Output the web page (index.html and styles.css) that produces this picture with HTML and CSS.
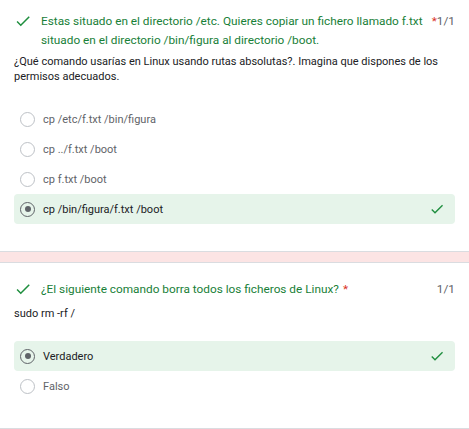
FILE: index.html
```html
<!DOCTYPE html>
<html lang="es">
<head>
<meta charset="utf-8">
<title>Cuestionario</title>
<link rel="stylesheet" href="styles.css">
</head>
<body>
<section class="card card-first">
  <div class="q-head">
    <svg class="q-check" viewBox="0 0 24 24"><path d="M9 16.17L4.83 12l-1.42 1.41L9 19 21 7l-1.41-1.41z"/></svg>
    <div class="q-title">Estas situado en el directorio /etc. Quieres copiar un fichero llamado f.txt situado en el directorio /bin/figura al directorio /boot.</div>
    <span class="q-req">*</span>
    <span class="q-points">1/1</span>
  </div>
  <div class="q-desc">¿Qué comando usarías en Linux usando rutas absolutas?. Imagina que dispones de los permisos adecuados.</div>
  <div class="options">
    <div class="opt"><span class="radio"></span><span class="opt-label">cp /etc/f.txt /bin/figura</span></div>
    <div class="opt"><span class="radio"></span><span class="opt-label">cp ../f.txt /boot</span></div>
    <div class="opt"><span class="radio"></span><span class="opt-label">cp f.txt /boot</span></div>
    <div class="opt opt-correct"><span class="radio radio-on"></span><span class="opt-label">cp /bin/figura/f.txt /boot</span>
      <svg class="opt-check" viewBox="0 0 24 24"><path d="M9 16.17L4.83 12l-1.42 1.41L9 19 21 7l-1.41-1.41z"/></svg></div>
  </div>
</section>
<section class="card card-second">
  <div class="q-head">
    <svg class="q-check" viewBox="0 0 24 24"><path d="M9 16.17L4.83 12l-1.42 1.41L9 19 21 7l-1.41-1.41z"/></svg>
    <div class="q-title">¿El siguiente comando borra todos los ficheros de Linux?</div>
    <span class="q-req">*</span>
    <span class="q-points">1/1</span>
  </div>
  <div class="q-desc q-desc-short">sudo rm -rf /</div>
  <div class="options options-2">
    <div class="opt opt-correct"><span class="radio radio-on"></span><span class="opt-label">Verdadero</span>
      <svg class="opt-check" viewBox="0 0 24 24"><path d="M9 16.17L4.83 12l-1.42 1.41L9 19 21 7l-1.41-1.41z"/></svg></div>
    <div class="opt"><span class="radio"></span><span class="opt-label">Falso</span></div>
  </div>
</section>
</body>
</html>
```
FILE: styles.css
```css
html, body {
  margin: 0;
  padding: 0;
}
body {
  background: #fce4e4;
  font-family: Roboto, "Liberation Sans", Arial, sans-serif;
  color: #202124;
  width: 469px;
  height: 429px;
  overflow: hidden;
}
.card {
  background: #fff;
  border-top: 1px solid #dadce0;
  border-bottom: 1px solid #dadce0;
  margin-bottom: 10px;
  padding: 12px 14px 27px 14px;
}
.card-first {
  border-top: none;
  padding-top: 12px;
}
.card-second {
  padding-top: 17px;
}
.q-head {
  display: flex;
  align-items: flex-start;
  font-size: 11.8px;
  line-height: 19px;
}
.q-check {
  width: 18px;
  height: 18px;
  fill: #1e8e3e;
  margin: 0 9px 0 0;
  flex: none;
}
.q-title {
  color: #188038;
  flex: 0 1 auto;
}
.q-req {
  color: #d93025;
  margin-left: 4px;
  flex: none;
}
.q-points {
  margin-left: auto;
  color: #5f6368;
  flex: none;
}
.q-desc {
  font-size: 11px;
  line-height: 15px;
  margin-top: 4px;
  color: #202124;
}
.q-desc-short {
  margin-top: 7px;
}
.options {
  margin-top: 20px;
}
.options-2 {
  margin-top: 20px;
}
.opt {
  display: flex;
  align-items: center;
  height: 30px;
  padding: 0 10px 0 6px;
  border-radius: 4px;
  font-size: 11px;
  color: #5f6368;
}
.opt-correct {
  background: #e6f4ea;
  color: #202124;
}
.radio {
  width: 13px;
  height: 13px;
  border: 1.5px solid #bdc1c6;
  border-radius: 50%;
  margin-right: 8px;
  flex: none;
  display: flex;
  align-items: center;
  justify-content: center;
}
.radio-on {
  border-color: #5f6368;
}
.radio-on::after {
  content: "";
  width: 6px;
  height: 6px;
  border-radius: 50%;
  background: #5f6368;
}
.opt-label {
  flex: 1;
}
.opt-check {
  width: 16px;
  height: 16px;
  fill: #1e8e3e;
  flex: none;
}
```
